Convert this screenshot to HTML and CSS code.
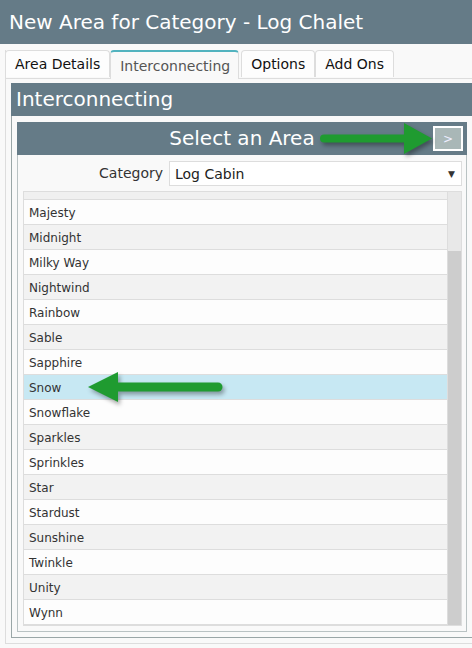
FILE: index.html
```html
<!DOCTYPE html>
<html>
<head>
<meta charset="utf-8">
<title>New Area for Category - Log Chalet</title>
<link rel="stylesheet" href="styles.css">
</head>
<body>
<div class="titlebar">New Area for Category - Log Chalet</div>
<div class="tabs">
  <ul class="tabnav">
    <li class="tab">Area Details</li>
    <li class="tab active">Interconnecting</li>
    <li class="tab">Options</li>
    <li class="tab">Add Ons</li>
  </ul>
  <div class="tabpanel">
    <div class="section-head">Interconnecting</div>
    <div class="outer">
      <div class="inner">
        <div class="inner-head">
          <span class="ih-spacer"></span>
          <span class="ih-title">Select an Area</span>
          <span class="ih-right"><span class="next">&gt;</span></span>
        </div>
        <div class="cat-row">
          <span class="cat-label">Category</span>
          <div class="select"><span>Log Cabin</span><span class="caret">&#9660;</span></div>
        </div>
        <div class="list">
          <div class="list-body">
            <div class="list-head"></div>
            <div class="row">Majesty</div>
            <div class="row alt">Midnight</div>
            <div class="row">Milky Way</div>
            <div class="row alt">Nightwind</div>
            <div class="row">Rainbow</div>
            <div class="row alt">Sable</div>
            <div class="row">Sapphire</div>
            <div class="row selected">Snow</div>
            <div class="row">Snowflake</div>
            <div class="row alt">Sparkles</div>
            <div class="row">Sprinkles</div>
            <div class="row alt">Star</div>
            <div class="row">Stardust</div>
            <div class="row alt">Sunshine</div>
            <div class="row">Twinkle</div>
            <div class="row alt">Unity</div>
            <div class="row">Wynn</div>
          </div>
          <div class="scrollbar"><div class="thumb"></div></div>
        </div>
      </div>
    </div>
  </div>
</div>
<svg class="arrows" width="472" height="648" viewBox="0 0 472 648">
  <g class="arrow">
    <line x1="324" y1="138.5" x2="410" y2="138.5" stroke="#1f9b30" stroke-width="8" stroke-linecap="round"/>
    <polygon points="404,123 432,138.5 404,154" fill="#1f9b30"/>
  </g>
  <g class="arrow">
    <line x1="112" y1="387" x2="218" y2="387" stroke="#1f9b30" stroke-width="9" stroke-linecap="round"/>
    <polygon points="88,387 118,372 118,402" fill="#1f9b30"/>
  </g>
</svg>
</body>
</html>
```
FILE: styles.css
```css
html, body {
  margin: 0;
  padding: 0;
  overflow: hidden;
}
body {
  background: #f9f9f9;
  font-family: "DejaVu Sans", Verdana, sans-serif;
  color: #333;
  width: 472px;
  height: 648px;
  position: relative;
}
.titlebar {
  height: 44px;
  line-height: 44px;
  background: #657b87;
  color: #fff;
  font-size: 20px;
  padding-left: 9px;
  white-space: nowrap;
}
.tabs {
  margin: 6px 0 0 5px;
  width: 480px;
  border: 1px solid #dddddd;
  border-top: none;
  box-sizing: border-box;
  background: #f9f9f9;
}
.tabnav {
  list-style: none;
  margin: 0 0 0 -1px;
  padding: 0;
  display: flex;
  border-bottom: 1px solid #dddddd;
  height: 28px;
}
.tab {
  height: 27px;
  box-sizing: border-box;
  border: 1px solid #dddddd;
  border-bottom: none;
  border-radius: 4px 4px 0 0;
  background: #fdfdfd;
  font-size: 14px;
  color: #111;
  padding: 5px 9px 0 9px;
  line-height: 17px;
  white-space: nowrap;
}
.tab.active {
  border-top: 2px solid #52b3bf;
  height: 29px;
  margin-right: 2px;
  padding-left: 9px;
  padding-right: 8px;
  background: #f9f9f9;
  color: #555;
  padding-top: 6px;
}
.tabpanel {
  padding: 4px 0 5px 5px;
}
.section-head {
  width: 462px;
  height: 33px;
  line-height: 33px;
  background: #657b87;
  color: #fff;
  font-size: 20px;
  padding-left: 5px;
  box-sizing: border-box;
}
.outer {
  width: 462px;
  box-sizing: border-box;
  border: 1px solid #9aa6a7;
  border-top: none;
  padding: 6px 5px 5px 5px;
}
.inner {
  width: 450px;
  box-sizing: border-box;
  border: 1px solid #b9c2c3;
  padding: 0 4px 5px 5px;
}
.inner-head {
  margin: -1px -5px 0 -6px;
  height: 33px;
  background: #657b87;
  display: grid;
  grid-template-columns: 1fr auto 1fr;
  align-items: center;
}
.ih-title {
  color: #fff;
  font-size: 20px;
  line-height: 33px;
}
.ih-right {
  display: flex;
  justify-content: flex-end;
  padding-right: 4px;
}
.next {
  width: 30px;
  height: 25px;
  box-sizing: border-box;
  border: 2px solid #fff;
  background: #a9b7b7;
  color: #eef;
  font-size: 12px;
  display: flex;
  align-items: center;
  justify-content: center;
}
.cat-row {
  display: flex;
  align-items: center;
  margin-top: 6px;
  height: 25px;
}
.cat-label {
  flex: 1;
  text-align: right;
  font-size: 14px;
  color: #333;
  padding-right: 6px;
  padding-bottom: 2px;
}
.select {
  width: 293px;
  height: 25px;
  box-sizing: border-box;
  border: 1px solid #dddddd;
  background: #fff;
  display: flex;
  align-items: center;
  justify-content: space-between;
  padding: 1px 6px 0 5px;
  font-size: 14px;
  color: #222;
}
.caret {
  font-size: 9px;
  color: #333;
}
.list {
  margin-top: 5px;
  width: 439px;
  box-sizing: border-box;
  border: 1px solid #dddddd;
  display: flex;
}
.list-body {
  width: 424px;
  border-right: 1px solid #dddddd;
  box-sizing: border-box;
}
.list-head {
  height: 8px;
  background: #f0f0f0;
  border-bottom: 1px solid #dddddd;
  box-sizing: border-box;
}
.row {
  height: 25px;
  line-height: 22px;
  padding-top: 2px;
  border-bottom: 1px solid #dddddd;
  box-sizing: border-box;
  padding-left: 5px;
  font-size: 12px;
  color: #333;
  background: #fdfdfd;
}
.row.alt {
  background: #f2f2f2;
}
.row.selected {
  background: #c7e8f3;
}
.scrollbar {
  width: 13px;
  background: #e8e8e8;
  display: flex;
  flex-direction: column;
  justify-content: flex-end;
}
.thumb {
  height: 374px;
  background: #cdcdcd;
}
.arrows {
  position: absolute;
  left: 0;
  top: 0;
  pointer-events: none;
}
.arrow {
  filter: drop-shadow(2px 3px 2px rgba(0, 0, 0, 0.35));
}
```
